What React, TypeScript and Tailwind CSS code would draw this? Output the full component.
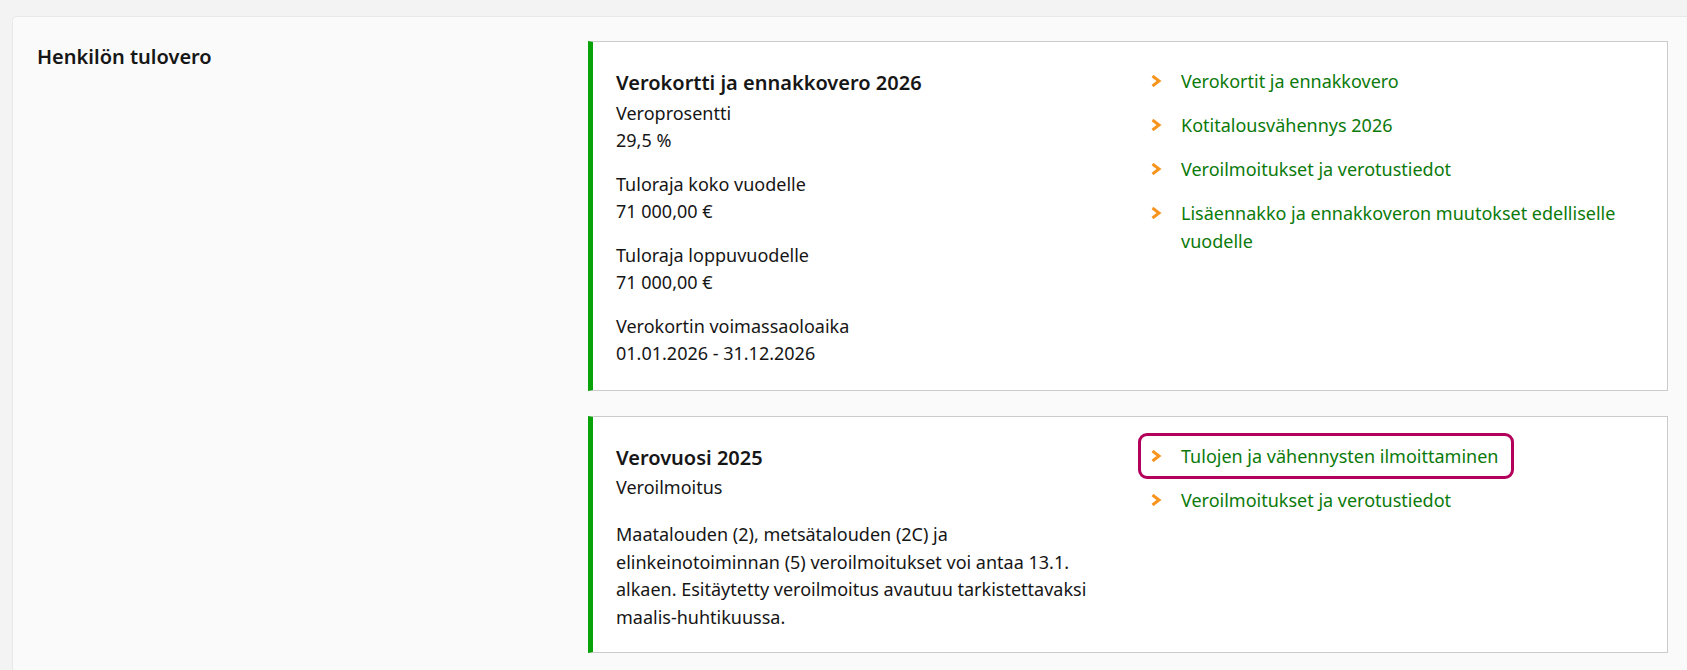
import React from "react";

const Chevron = () => (
  <svg width="11" height="12" viewBox="0 0 11 12" className="shrink-0 mt-[8px]" aria-hidden="true">
    <polyline points="1.5,1 8,6 1.5,11" fill="none" stroke="#f7941e" strokeWidth="3" strokeLinejoin="miter" />
  </svg>
);

function LinkItem({ text, focused = false }: { text: string; focused?: boolean }) {
  return (
    <a
      href="#"
      className={
        "flex items-start gap-[19px] px-[10px] py-[6px] mb-[4px] leading-[28px] text-[#0b7a0b] no-underline rounded-[6px] " +
        (focused ? "outline-[3px] outline-solid outline-[#b3005a] w-fit pr-[13px]" : "")
      }
    >
      <Chevron />
      <span>{text}</span>
    </a>
  );
}

function Field({ label, value, first = false }: { label: string; value: string; first?: boolean }) {
  return (
    <div className={first ? "mt-[3px]" : "mt-[17px]"}>
      <div className="leading-[27px]">{label}</div>
      <div className="leading-[27px]">{value}</div>
    </div>
  );
}

export default function App() {
  return (
    <div
      className="min-h-[670px] bg-[#f3f3f3] pl-[12px] pt-[16px] text-[#161616] text-[18px]"
      style={{ fontFamily: '"Noto Sans", "Open Sans", sans-serif' }}
    >
      <div className="flex bg-[#fafafa] border-l border-t border-[#e8e8e8] rounded-tl-[5px] pl-[24px] pt-[24px] min-h-[654px]">
        <div className="w-[551px] shrink-0">
          <h2 className="mt-[2px] text-[20px] font-semibold leading-[28px]">Henkilön tulovero</h2>
        </div>
        <div className="w-[1080px] shrink-0">
          <section className="flex bg-white border border-[#cbcbcb] border-l-[5px] border-l-[#08a308] pl-[23px] pt-[19px] pb-[23px]">
            <div className="w-[525px] shrink-0 pt-[8px]">
              <h3 className="text-[20px] font-semibold leading-[28px]">Verokortti ja ennakkovero 2026</h3>
              <Field first label="Veroprosentti" value="29,5 %" />
              <Field label="Tuloraja koko vuodelle" value="71 000,00 €" />
              <Field label="Tuloraja loppuvuodelle" value="71 000,00 €" />
              <Field label="Verokortin voimassaoloaika" value="01.01.2026 - 31.12.2026" />
            </div>
            <div className="flex-1 pr-[16px]">
              <LinkItem text="Verokortit ja ennakkovero" />
              <LinkItem text="Kotitalousvähennys 2026" />
              <LinkItem text="Veroilmoitukset ja verotustiedot" />
              <LinkItem text="Lisäennakko ja ennakkoveron muutokset edelliselle vuodelle" />
            </div>
          </section>

          <section className="mt-[25px] flex bg-white border border-[#cbcbcb] border-l-[5px] border-l-[#08a308] pl-[23px] pt-[19px] pb-[20px]">
            <div className="w-[525px] shrink-0 pt-[8px]">
              <h3 className="text-[20px] font-semibold leading-[28px]">Verovuosi 2025</h3>
              <div className="mt-[2px] leading-[27px]">Veroilmoitus</div>
              <p className="mt-[20px] max-w-[497px] leading-[27.7px]">
                Maatalouden (2), metsätalouden (2C) ja elinkeinotoiminnan (5) veroilmoitukset voi antaa 13.1. alkaen. Esitäytetty veroilmoitus avautuu tarkistettavaksi maalis-huhtikuussa.
              </p>
            </div>
            <div className="flex-1 pr-[16px]">
              <LinkItem text="Tulojen ja vähennysten ilmoittaminen" focused />
              <LinkItem text="Veroilmoitukset ja verotustiedot" />
            </div>
          </section>
        </div>
      </div>
    </div>
  );
}
